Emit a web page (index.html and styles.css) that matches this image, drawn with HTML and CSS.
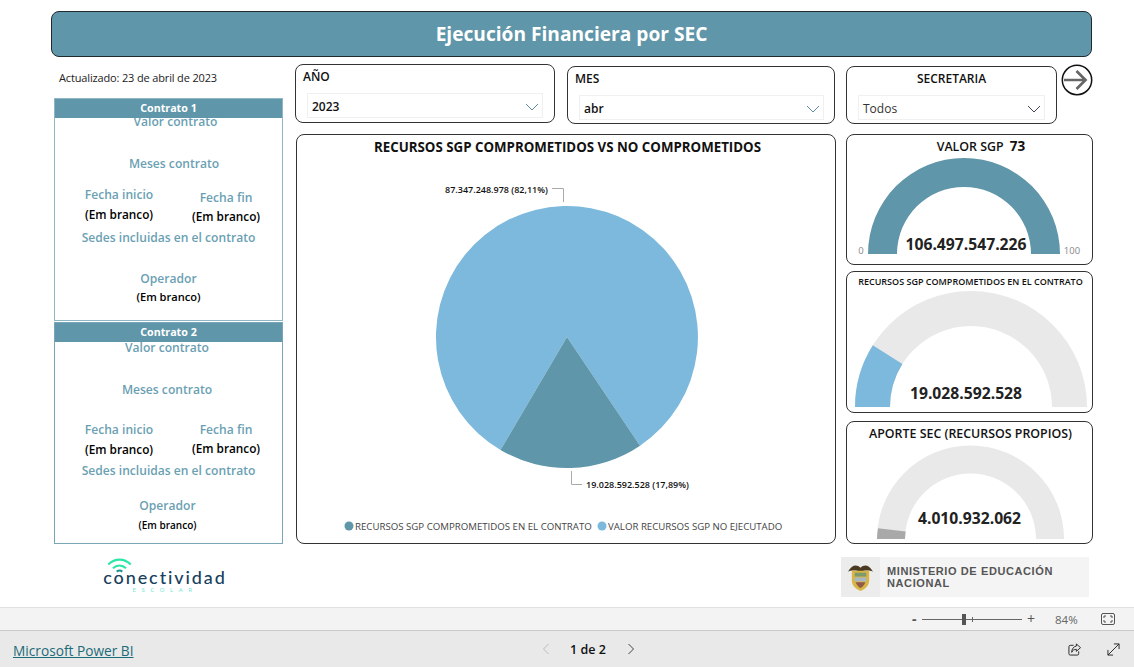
FILE: index.html
```html
<!DOCTYPE html>
<html lang="es">
<head>
<meta charset="utf-8">
<title>Ejecución Financiera por SEC</title>
<link rel="stylesheet" href="styles.css">
</head>
<body>
<div class="app">
  <main class="canvas">
    <header class="banner">Ejecución Financiera por SEC</header>
    <div class="report">
      <aside class="left">
        <p class="updated">Actualizado: 23 de abril de 2023</p>
        <section class="contract contract-1">
          <h2 class="contract-bar">Contrato 1</h2>
          <div class="label valor">Valor contrato</div>
          <div class="label meses">Meses contrato</div>
          <div class="dates">
            <div><div class="label">Fecha inicio</div><div class="blank start-blank">(Em branco)</div></div>
            <div class="end"><div class="label">Fecha fin</div><div class="blank end-blank">(Em branco)</div></div>
          </div>
          <div class="label sedes">Sedes incluidas en el contrato</div>
          <div class="label operador">Operador</div>
          <div class="blank op-blank">(Em branco)</div>
        </section>
        <section class="contract contract-2">
          <h2 class="contract-bar">Contrato 2</h2>
          <div class="label valor">Valor contrato</div>
          <div class="label meses">Meses contrato</div>
          <div class="dates">
            <div><div class="label">Fecha inicio</div><div class="blank start-blank">(Em branco)</div></div>
            <div class="end"><div class="label">Fecha fin</div><div class="blank end-blank">(Em branco)</div></div>
          </div>
          <div class="label sedes">Sedes incluidas en el contrato</div>
          <div class="label operador">Operador</div>
          <div class="blank op-blank">(Em branco)</div>
        </section>
        <div class="logo-conectividad">
          <svg class="wifi" viewBox="0 0 28 16" aria-hidden="true">
            <path d="M2 7C9 0 19 0 26 7" class="wifi-a"/>
            <path d="M7 11C11 7 17 7 21 11" class="wifi-b"/>
            <path d="M11 14.5C13 13 15 13 17 14.5" class="wifi-c"/>
          </svg>
          <div class="logo-word">conectividad</div>
          <div class="logo-sub">ESCOLAR</div>
        </div>
      </aside>

      <div class="right">
        <div class="slicers">
          <div class="slicer slicer-year">
            <div class="slicer-title">AÑO</div>
            <div class="select"><span class="select-value">2023</span><svg class="chev" viewBox="0 0 14 8"><path d="M1 1l6 6 6-6"/></svg></div>
          </div>
          <div class="slicer slicer-month">
            <div class="slicer-title">MES</div>
            <div class="select"><span class="select-value">abr</span><svg class="chev" viewBox="0 0 14 8"><path d="M1 1l6 6 6-6"/></svg></div>
          </div>
          <div class="slicer slicer-sec">
            <div class="slicer-title centered">SECRETARIA</div>
            <div class="select"><span class="select-value regular">Todos</span><svg class="chev dark" viewBox="0 0 14 8"><path d="M1 1l6 6 6-6"/></svg></div>
          </div>
          <svg class="next" viewBox="0 0 32 32" aria-label="Siguiente">
            <circle cx="16" cy="16" r="14.700" class="next-ring"/>
            <path d="M3 16H24M15.500 7l9 9-9 9" class="next-arrow"/>
          </svg>
        </div>

        <div class="visuals">
          <section class="card chart">
            <svg class="fill" viewBox="297 135 538 408">
              <text x="567.5" y="151.5" class="t-title" text-anchor="middle">RECURSOS SGP COMPROMETIDOS VS NO COMPROMETIDOS</text>
              <path class="c-light" d="M567 337L640.05 445.7A131 131 0 1 0 500.5 449.9Z"/>
              <path class="c-teal" d="M567 337L500.5 449.9A131 131 0 0 0 640.05 445.7Z"/>
              <path class="leader" d="M552 188.5H563.5V202M571.5 471V484.5H582"/>
              <text x="445" y="192.5" class="t-data">87.347.248.978 (82,11%)</text>
              <text x="586" y="487.5" class="t-data">19.028.592.528 (17,89%)</text>
              <circle cx="349" cy="526" r="4.5" class="c-teal"/>
              <text x="355" y="530" class="t-legend">RECURSOS SGP COMPROMETIDOS EN EL CONTRATO</text>
              <circle cx="602" cy="526" r="4.5" class="c-light"/>
              <text x="608" y="530" class="t-legend">VALOR RECURSOS SGP NO EJECUTADO</text>
            </svg>
          </section>

          <div class="gauges">
            <section class="card gauge-1">
              <svg class="fill" viewBox="847 135 245 129">
                <text x="981" y="150.5" class="t-gauge-title" text-anchor="middle">VALOR SGP <tspan dx="3" class="t-strong">73</tspan></text>
                <path class="c-teal" d="M868 254A96 96 0 0 1 1060 254H1031A67 67 0 0 0 897 254Z"/>
                <text x="966" y="250" class="t-value" text-anchor="middle">106.497.547.226</text>
                <text x="861" y="254" class="t-scale" text-anchor="middle">0</text>
                <text x="1072" y="254" class="t-scale" text-anchor="middle">100</text>
              </svg>
            </section>
            <section class="card gauge-2">
              <svg class="fill" viewBox="847 272 245 140">
                <text x="970.5" y="284.5" class="t-gauge-small" text-anchor="middle">RECURSOS SGP COMPROMETIDOS EN EL CONTRATO</text>
                <path class="c-track" d="M855 407A116 116 0 0 1 1087 407H1052A81 81 0 0 0 890 407Z"/>
                <path class="c-light" d="M855 407A116 116 0 0 1 872.8 345.3L902.4 363.9A81 81 0 0 0 890 407Z"/>
                <text x="966" y="399" class="t-value" text-anchor="middle">19.028.592.528</text>
              </svg>
            </section>
            <section class="card gauge-3">
              <svg class="fill" viewBox="847 422 245 121">
                <text x="970.5" y="437.5" class="t-gauge-title" text-anchor="middle">APORTE SEC (RECURSOS PROPIOS)</text>
                <path class="c-track" d="M877 539A93.5 93.5 0 0 1 1064 539H1036A65.5 65.5 0 0 0 905 539Z"/>
                <path class="c-grey" d="M877 539A93.5 93.5 0 0 1 878 528.2L905.7 531.4A65.5 65.5 0 0 0 905 539Z"/>
                <text x="969.5" y="524" class="t-value" text-anchor="middle">4.010.932.062</text>
              </svg>
            </section>
          </div>
        </div>

        <div class="ministry">
          <div class="crest">
            <svg viewBox="0 0 28 30" aria-hidden="true">
              <path class="crest-wing" d="M1 9C5 2 10 1 14 5C18 1 23 2 27 9C22 7 18 8 14 9C10 8 6 7 1 9Z"/>
              <path class="crest-shield" d="M5 8H23V18C23 24 18 27 14 29C10 27 5 24 5 18Z"/>
              <path class="crest-top" d="M8 10H20V14H8Z"/>
              <path class="crest-mid" d="M8 15H20V19H8Z"/>
              <path class="crest-low" d="M9 20H19C18 23 16 25 14 26C12 25 10 23 9 20Z"/>
            </svg>
          </div>
          <div class="ministry-name">MINISTERIO DE EDUCACIÓN<br>NACIONAL</div>
        </div>
      </div>
    </div>
  </main>

  <div class="zoombar">
    <span class="zoom-minus">-</span>
    <div class="slider"><span class="tick"></span><span class="thumb"></span></div>
    <span class="zoom-plus">+</span>
    <span class="zoom-pct">84%</span>
    <svg class="fit" viewBox="0 0 14 12"><rect x="0.5" y="0.5" width="13" height="11" rx="1.5" class="fit-box"/><path d="M3 5V3H5M9 3H11V5M11 7V9H9M5 9H3V7" class="fit-box"/></svg>
  </div>

  <footer class="footer">
    <a class="pbi" href="#">Microsoft Power BI</a>
    <nav class="pager">
      <svg class="pg pg-off" viewBox="0 0 8 12"><path d="M6.5 1L1.5 6l5 5"/></svg>
      <span class="pg-text">1 de 2</span>
      <svg class="pg" viewBox="0 0 8 12"><path d="M1.5 1l5 5-5 5"/></svg>
    </nav>
    <div class="actions">
      <svg class="act" viewBox="0 0 14 14"><path d="M6 2.5H2.5A1.5 1.5 0 0 0 1 4v7.5A1.5 1.5 0 0 0 2.5 13H10a1.5 1.5 0 0 0 1.5-1.5V9"/><path d="M9 1l4.5 4L9 9V6.8C6.8 6.8 5 7.800 4 10c0-3.500 2-6.200 5-6.700Z"/></svg>
      <svg class="act" viewBox="0 0 14 14"><path d="M1 13L13 1M7.500 1H13V6.500M1 7.500V13H6.500"/></svg>
    </div>
  </footer>
</div>
</body>
</html>
```

FILE: styles.css
```css
* { box-sizing: border-box; }
html, body { margin: 0; padding: 0; }
body { font-family: "Open Sans", "Noto Sans", "Liberation Sans", sans-serif; background: #fff; color: #111; }
.app { width: 1134px; height: 667px; display: flex; flex-direction: column; overflow: hidden; }
.canvas { height: 607px; padding: 11px 0 0 51px; }

.banner {
  width: 1041px; height: 46px; background: #5f96a9; color: #fff;
  border: 1px solid #1f2a30; border-radius: 8px;
  display: flex; align-items: center; justify-content: center;
  font-size: 19.150px; font-weight: 700;
}
.report { display: flex; margin-top: 7px; }

/* left column */
.left { width: 229px; margin-left: 3px; }
.updated { height: 34px; margin: 0; padding: 6px 0 0 5px; font-size: 11px; line-height: 16px; color: #222; letter-spacing: -0.15px; }
.contract { height: 223px; border: 1.5px solid #8fb6c4; }
.contract-2 { height: 222px; margin-top: 1px; border-color: #79a6b7; }
.contract-bar {
  margin: 0; height: 19px; padding-top: 2px; background: #5f96a9; color: #fff; position: relative;
  font-size: 10.700px; font-weight: 700; line-height: 14px; text-align: center;
}
.label { font-size: 12.100px; font-weight: 600; line-height: 16px; color: #6b9fb3; text-align: center; white-space: nowrap; }
.blank { font-size: 11.800px; font-weight: 600; line-height: 16px; color: #000; text-align: center; white-space: nowrap; }
.dates { display: grid; grid-template-columns: 108px 106px; padding-left: 10px; }
.op-blank { font-size: 11.100px; }

.label.valor { line-height: 12px; }
.contract-1 .valor { margin-top: -2.500px; padding-left: 14px; }
.contract-1 .meses { margin-top: 28px; padding-left: 11px; }
.contract-1 .dates { margin-top: 15px; }
.contract-1 .start-blank { margin-top: 3px; }
.contract-1 .end { padding-top: 3px; }
.contract-1 .end-blank { margin-top: 2.500px; }
.contract-1 .sedes { margin-top: 6px; }
.contract-1 .operador { margin-top: 25px; }
.contract-1 .op-blank { margin-top: 2px; }

.contract-2 .valor { margin-top: 0; padding-right: 3px; }
.contract-2 .meses { margin-top: 28px; padding-right: 3px; }
.contract-2 .dates { margin-top: 24px; }
.contract-2 .start-blank { margin-top: 3px; }
.contract-2 .end-blank { margin-top: 2px; }
.contract-2 .sedes { margin-top: 6px; }
.contract-2 .operador { margin-top: 19px; padding-right: 2px; }
.contract-2 .op-blank { margin-top: 3px; font-size: 10px; padding-right: 2px; }

.logo-conectividad { height: 40px; margin-top: 14px; display: flex; flex-direction: column; align-items: center; padding-right: 7px; }
.wifi { width: 27px; height: 15px; display: block; margin-right: 91px; fill: none; flex: none; }
.wifi path { stroke-width: 2.200; }
.wifi-a { stroke: #2ce6a8; }
.wifi-b { stroke: #2ce6a8; }
.wifi-c { stroke: #1f8f8f; }
.logo-word { margin-top: -4px; font-family: "Lato", sans-serif; font-weight: 500; font-size: 18px; line-height: 17px; letter-spacing: 1.900px; color: #17405e; }
.logo-sub { font-size: 6px; line-height: 8px; letter-spacing: 5.600px; color: #6fe3d3; }

/* right block */
.right { margin-left: 12px; width: 798px; }
.slicers { display: flex; align-items: flex-start; }
.slicer { border: 1px solid #333; border-radius: 8px; position: relative; }
.slicer-year { width: 260px; height: 59px; padding: 3px 11px 0 7px; }
.slicer-month { width: 268px; height: 58px; margin: 2px 0 0 12px; padding: 3px 10px 0 7px; }
.slicer-sec { width: 211px; height: 58px; margin: 2px 0 0 11px; padding: 3px 11px 0 11px; }
.slicer-title { font-size: 12px; font-weight: 600; line-height: 17px; color: #111; }
.slicer-title.centered { text-align: center; }
.slicer-month .select { margin-left: 4px; }
.slicer-year .select { margin-left: 4px; margin-top: 8px; }
.select { height: 25px; margin-top: 8px; border: 1px solid #f0f0f0; display: flex; align-items: center; justify-content: space-between; padding: 2px 3px 0 4px; }
.select-value { font-size: 12px; font-weight: 600; color: #111; }
.select-value.regular { font-weight: 400; color: #333; }
.chev { width: 14px; height: 8px; fill: none; stroke: #5f8ba0; stroke-width: 1; }
.chev.dark { stroke: #445; }
.next { width: 32px; height: 32px; margin: 0 0 0 4px; flex: none; }
.next-ring { fill: #fff; stroke: #111; stroke-width: 1.5; }
.next-arrow { fill: none; stroke: #666; stroke-width: 2.700; }

.visuals { display: flex; margin: 10px 0 0 1px; }
.card { border: 1px solid #333; border-radius: 8px; background: #fff; overflow: hidden; }
.fill { display: block; width: 100%; height: 100%; }
.chart { width: 540px; height: 410px; flex: none; }
.gauges { width: 247px; margin-left: 10px; display: flex; flex-direction: column; }
.gauge-1 { height: 131px; }
.gauge-2 { height: 142px; margin-top: 6px; }
.gauge-3 { height: 123px; margin-top: 8px; }

.c-teal { fill: #5f96a9; }
.c-light { fill: #7db9dd; }
.c-track { fill: #e9e9e9; }
.c-grey { fill: #a9a9a9; }
.leader { fill: none; stroke: #aaa; stroke-width: 1; }
.t-title { font-size: 13.300px; font-weight: 700; fill: #111; }
.t-data { font-size: 9px; font-weight: 600; fill: #111; }
.t-legend { font-size: 9.670px; fill: #444; }
.t-gauge-title { font-size: 12.400px; font-weight: 600; fill: #111; }
.t-strong { font-size: 13.500px; font-weight: 700; }
.t-gauge-small { font-size: 9px; font-weight: 600; fill: #111; }
.t-value { font-size: 15.700px; font-weight: 700; fill: #222; }
.t-scale { font-size: 9.500px; fill: #888; }

.ministry { width: 248px; height: 40px; margin: 13px 0 0 546px; background: #f4f4f4; display: flex; align-items: center; }
.crest { width: 39px; height: 40px; background: #ececec; display: flex; align-items: center; justify-content: center; flex: none; }
.crest svg { width: 27px; height: 29px; }
.crest-wing { fill: #4a3a22; }
.crest-shield { fill: #d8b545; }
.crest-top { fill: #7f9a6a; }
.crest-mid { fill: #a8b7c8; }
.crest-low { fill: #8f5a4a; }
.ministry-name { margin-left: 7px; font-family: "Liberation Sans", sans-serif; font-size: 11px; font-weight: 700; line-height: 12px; letter-spacing: 0.6px; color: #555; }

/* bottom bars */
.zoombar { height: 23px; background: #f3f3f3; border-top: 1px solid #e1e1e1; display: flex; align-items: center; padding-left: 912px; color: #555; }
.zoom-minus { width: 10px; font-size: 14px; font-weight: 700; line-height: 14px; }
.slider { width: 100px; height: 1px; background: #666; position: relative; }
.thumb { position: absolute; left: 40px; top: -5px; width: 4px; height: 11px; background: #555; }
.tick { position: absolute; left: 50px; top: -2px; width: 1px; height: 5px; background: #666; }
.zoom-plus { margin-left: 5px; width: 12px; font-size: 14px; line-height: 14px; }
.zoom-pct { margin-left: 16px; width: 24px; font-size: 11.5px; color: #666; }
.fit { width: 14px; height: 12px; margin-left: 22px; fill: none; }
.fit-box { fill: none; stroke: #555; stroke-width: 1; }

.footer { height: 37px; background: #e9e9e9; border-top: 1px solid #c9c9c9; display: flex; align-items: center; position: relative; }
.pbi { margin: 3px 0 0 13px; font-size: 13.700px; color: #1c6b78; text-decoration: underline; }
.pager { position: absolute; left: 542px; top: 0; height: 36px; display: flex; align-items: center; }
.pg { width: 8px; height: 12px; fill: none; stroke: #444; stroke-width: 1; }
.pg-off { stroke: #bbb; }
.pg-text { margin: 1px 20px 0 19px; width: 38px; text-align: center; font-size: 12.500px; color: #111; font-weight: 600; white-space: nowrap; }
.actions { margin-left: auto; display: flex; gap: 26px; padding-right: 14px; }
.act { width: 13px; height: 13px; fill: none; stroke: #222; stroke-width: 1; }
```
